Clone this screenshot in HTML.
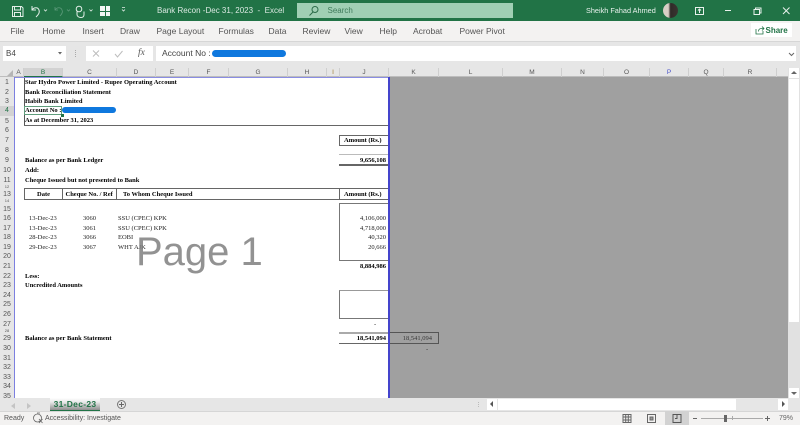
<!DOCTYPE html>
<html><head><meta charset="utf-8"><style>
html,body{margin:0;padding:0;width:800px;height:425px;overflow:hidden;background:#fff}
#p{position:relative;width:800px;height:425px;overflow:hidden;font-family:"Liberation Sans",sans-serif;background:#e6e6e6}
#p div,#p span{position:absolute;white-space:nowrap}
.r{left:0;width:800px}
.m{font-size:8.5px;color:#555;top:21px;height:20px;line-height:20px}
.c{top:68px;height:9px;line-height:10px;font-size:6.5px;color:#555;text-align:center;border-right:1px solid #cfcfcf;box-sizing:border-box}
.n{left:0;width:14px;text-align:center;font-size:7px;color:#555;height:10px;line-height:10px;margin-top:1px}
.t{font-family:"Liberation Serif",serif;font-size:6.5px;color:#222;height:10px;line-height:10px;margin-top:1px}
.b{font-weight:bold;color:#000}
.k{background:#666}
</style></head><body><div id="p">
<div style="left:0;top:0;width:800px;height:21px;background:#217346"></div>
<svg style="position:absolute;left:0;top:0" width="140" height="21" fill="none" stroke="#e4efe9" stroke-width="1">
<path d="M12.5 6.5h9l1.500 1.500v8.500h-10.500zM14.500 6.500v3.500h6v-3.500M14.500 16.500v-4h6v4"/>
<path d="M32 6v4h4M32 10c2-3 6-3 7 0 1 3-1 5-3 7"/>
<path d="M44 9.500l1.500 1.500 1.500-1.500" stroke-width=".8"/>
<path d="M55 7v3h3M55 10c2-3 6-3 7 0 1 2 0 4-2 6M67 9.500l1.500 1.500 1.500-1.500" stroke="#5d9a7b" stroke-width=".8"/>
<circle cx="79" cy="9" r="2.800"/><path d="M77 11.500v3c0 2 2 3 4 3s3-1 3-3v-3"/>
<path d="M89.500 9.500l1.500 1.500 1.500-1.500" stroke-width=".8"/>
<path d="M122 9.500l1.500 1.500 1.500-1.500M122 7.500h3" stroke-width=".8"/>
</svg>
<div style="left:100px;top:6px;width:10px;height:10px;background:#f3f7f5"></div>
<div style="left:104.500px;top:6px;width:1px;height:10px;background:#217346"></div>
<div style="left:100px;top:10.500px;width:10px;height:1px;background:#217346"></div>
<span style="left:157px;top:5px;font-size:8px;line-height:11px;color:#dbe9e2">Bank Recon -Dec 31, 2023&nbsp; -&nbsp; Excel</span>
<div style="left:297px;top:3px;width:216px;height:15px;background:#a0cfb4"></div>
<svg style="position:absolute;left:308px;top:5px" width="12" height="12" fill="none" stroke="#2b6b49" stroke-width="1"><circle cx="7" cy="4.500" r="3"/><path d="M5 7l-3.500 3.500"/></svg>
<span style="left:327.500px;top:5px;font-size:8px;line-height:11px;color:#3f7a5a">Search</span>
<span style="left:586px;top:5px;font-size:7.300px;line-height:11px;color:#e8f1ec">Sheikh Fahad Ahmed</span>
<div style="left:663px;top:3px;width:15px;height:15px;border-radius:50%;background:linear-gradient(90deg,#d8cfc6 0,#d8cfc6 35%,#2f2a28 50%,#3a3431 100%)"></div>
<svg style="position:absolute;left:690px;top:4px" width="110" height="14" fill="none" stroke="#e8f1ec" stroke-width="1">
<path d="M5.500 3.500h8v7h-8zM9.500 9v-4M8 6.500l1.500-1.500 1.500 1.500"/>
<path d="M35 6.500h6"/>
<path d="M64 5.500h5.500v5h-5.500zM65.500 5.500v-1.500h5.500v5h-1.500"/>
<path d="M93 3.500l6.500 6.500M99.500 3.500l-6.500 6.500"/>
</svg>
<div style="left:0;top:21px;width:800px;height:20px;background:#f3f2f1;border-bottom:1px solid #d6d6d6;box-sizing:content-box"></div>
<span class="m" style="left:10.500px">File</span>
<span class="m" style="left:42.500px">Home</span>
<span class="m" style="left:82.500px">Insert</span>
<span class="m" style="left:120px">Draw</span>
<span class="m" style="left:156.500px">Page Layout</span>
<span class="m" style="left:218.500px">Formulas</span>
<span class="m" style="left:268.500px">Data</span>
<span class="m" style="left:302.500px">Review</span>
<span class="m" style="left:344.500px">View</span>
<span class="m" style="left:379.500px">Help</span>
<span class="m" style="left:413px">Acrobat</span>
<span class="m" style="left:459.500px">Power Pivot</span>
<div style="left:751px;top:23px;width:41px;height:14px;background:#fff"></div>
<svg style="position:absolute;left:755px;top:25px" width="10" height="10" fill="none" stroke="#217346" stroke-width=".8"><path d="M1 4v5h7V6M3.500 6.500c0-2 1-3 3-3h2M7 1.500l2 2-2 2"/></svg>
<span style="left:765.500px;top:25px;font-size:8px;font-weight:bold;line-height:12px;color:#217346">Share</span>
<div style="left:0;top:42px;width:800px;height:26px;background:#e6e6e6"></div>
<div style="left:3px;top:46px;width:63px;height:15px;background:#fff"></div>
<span style="left:6px;top:48px;font-size:8px;line-height:11px;color:#444">B4</span>
<svg style="position:absolute;left:57px;top:51px" width="6" height="5" fill="#666"><path d="M1 1h4L3 3.500z"/></svg>
<div style="left:75px;top:50px;width:1px;height:1px;background:#aaa;box-shadow:0 2px #aaa,0 4px #aaa,0 6px #aaa"></div>
<div style="left:86px;top:46px;width:67px;height:15px;background:#fff"></div>
<svg style="position:absolute;left:90px;top:48px" width="60" height="12" fill="none" stroke="#bdbdbd" stroke-width="1"><path d="M3 2.500l6 6M9 2.500l-6 6M25 6l2.500 3 5-6"/></svg>
<span style="left:138px;top:47px;font-family:'Liberation Serif',serif;font-style:italic;font-size:9.500px;line-height:12px;color:#555">fx</span>
<div style="left:156px;top:46px;width:640px;height:15px;background:#fff"></div>
<span style="left:162px;top:48px;font-size:8.500px;line-height:11px;color:#444">Account No :</span>
<div style="left:212px;top:50px;width:74px;height:7px;border-radius:4px;background:#0f78de"></div>
<svg style="position:absolute;left:788px;top:52px" width="8" height="5" fill="none" stroke="#666"><path d="M1 1l2.500 2.500L6 1"/></svg>
<div style="left:0;top:68px;width:788px;height:9px;background:#e6e6e6;border-bottom:1px solid #bdbdbd;box-sizing:border-box"></div>
<svg style="position:absolute;left:6px;top:69px" width="8" height="8" fill="#b5b5b5"><path d="M7 1v6H1z"/></svg>
<div class="c" style="left:14px;width:10px">A</div><div class="c" style="left:24px;width:39px;background:#d2d2d2;color:#217346;border-bottom:1px solid #217346">B</div><div class="c" style="left:63px;width:54px">C</div><div class="c" style="left:117px;width:39px">D</div><div class="c" style="left:156px;width:33px">E</div><div class="c" style="left:189px;width:40px">F</div><div class="c" style="left:229px;width:59px">G</div><div class="c" style="left:288px;width:39px">H</div><div class="c" style="left:327px;width:13px;color:#a07a30">I</div><div class="c" style="left:340px;width:49px">J</div><div class="c" style="left:389px;width:50px">K</div><div class="c" style="left:439px;width:64px">L</div><div class="c" style="left:503px;width:59px">M</div><div class="c" style="left:562px;width:42px">N</div><div class="c" style="left:604px;width:46px">O</div><div class="c" style="left:650px;width:39px;color:#4a52c8">P</div><div class="c" style="left:689px;width:35px">Q</div><div class="c" style="left:724px;width:53px">R</div><div class="c" style="left:777px;width:11px;border-right:0"></div>
<div style="left:0;top:77px;width:15px;height:321px;background:#e6e6e6"></div>
<div class="n" style="top:77px">1</div><div class="n" style="top:87px">2</div><div class="n" style="top:96px">3</div><div class="n" style="top:105px;background:#d2d2d2;color:#217346">4</div><div class="n" style="top:116px">5</div><div class="n" style="top:125px">6</div><div class="n" style="top:135px">7</div><div class="n" style="top:145px">8</div><div class="n" style="top:155px">9</div><div class="n" style="top:165px">10</div><div class="n" style="top:175px">11</div><div class="n" style="top:184px;height:3px;overflow:hidden;line-height:3px;font-size:4px">12</div><div class="n" style="top:189px">13</div><div class="n" style="top:198px;height:4px;overflow:hidden;line-height:4px;font-size:4px">14</div><div class="n" style="top:204px">15</div><div class="n" style="top:213px">16</div><div class="n" style="top:223px">17</div><div class="n" style="top:232px">18</div><div class="n" style="top:242px">19</div><div class="n" style="top:251px">20</div><div class="n" style="top:261px">21</div><div class="n" style="top:271px">22</div><div class="n" style="top:280px">23</div><div class="n" style="top:290px">24</div><div class="n" style="top:299px">25</div><div class="n" style="top:309px">26</div><div class="n" style="top:319px">27</div><div class="n" style="top:328px;height:4px;overflow:hidden;line-height:4px;font-size:4px">28</div><div class="n" style="top:333px">29</div><div class="n" style="top:343px">30</div><div class="n" style="top:353px">31</div><div class="n" style="top:362px">32</div><div class="n" style="top:372px">33</div><div class="n" style="top:381px">34</div><div class="n" style="top:391px">35</div>
<div style="left:14px;top:77px;width:374px;height:321px;background:#fff"></div>
<div style="left:389px;top:77px;width:399px;height:321px;background:#a0a0a0"></div>
<div style="left:14px;top:77px;width:1px;height:321px;background:#7c80e0"></div>
<div style="left:15px;top:77px;width:374px;height:1px;background:#8a8de2"></div>
<div style="left:388px;top:77px;width:2px;height:321px;background:#4444cc;z-index:3"></div>
<div style="left:24px;top:78px;width:1px;height:47px;background:#555"></div>
<div class="k" style="left:24px;top:124.500px;width:364px;height:1.500px"></div>
<div style="left:24px;top:105.500px;width:38px;height:9.500px;border:1px solid #5f9d7c;box-sizing:border-box"></div>
<div style="left:61px;top:113.500px;width:3px;height:3px;background:#217346"></div>
<span class="t b" style="left:25px;top:77px">Star Hydro Power Limited - Rupee Operating Account</span>
<span class="t b" style="left:25px;top:87px">Bank Reconciliation Statement</span>
<span class="t b" style="left:25px;top:96px">Habib Bank Limited</span>
<span class="t b" style="left:25px;top:105px">Account No :</span>
<div style="left:62px;top:107px;width:54px;height:6px;border-radius:3px;background:#0f78de"></div>
<span class="t b" style="left:25px;top:115px">As at December 31, 2023</span>
<div style="left:339px;top:135px;width:49px;height:11px;border:1px solid #666;border-right:0;border-bottom-width:1.500px;box-sizing:border-box"></div>
<span class="t b" style="left:344px;top:135px">Amount (Rs.)</span>
<div style="left:339px;top:154px;width:49px;height:1px;background:#bbb"></div>
<span class="t b" style="right:414px;top:155px">9,656,108</span>
<div class="k" style="left:339px;top:164px;width:49px;height:1.500px"></div>
<span class="t b" style="left:25px;top:155px">Balance as per Bank Ledger</span>
<span class="t b" style="left:25px;top:165px">Add:</span>
<span class="t b" style="left:25px;top:175px">Cheque Issued but not presented to Bank</span>
<div class="k" style="left:24px;top:188px;width:364px;height:1px"></div>
<div class="k" style="left:24px;top:198.500px;width:364px;height:1.500px"></div>
<div class="k" style="left:24px;top:188px;width:1px;height:11px"></div>
<div class="k" style="left:62px;top:188px;width:1px;height:11px"></div>
<div class="k" style="left:116px;top:188px;width:1px;height:11px"></div>
<div class="k" style="left:339px;top:188px;width:1px;height:11px"></div>
<span class="t b" style="left:37px;top:188.500px">Date</span>
<span class="t b" style="left:65.500px;top:188.500px">Cheque No. / Ref</span>
<span class="t b" style="left:123px;top:188.500px">To Whom Cheque Issued</span>
<span class="t b" style="left:344px;top:188.500px">Amount (Rs.)</span>
<div style="left:339px;top:203px;width:49px;height:58px;border:1px solid #777;border-right:0;box-sizing:border-box"></div>
<span class="t" style="left:29px;top:213px">13-Dec-23</span><span class="t" style="left:83px;top:213px">3060</span><span class="t" style="left:118px;top:213px">SSU (CPEC) KPK</span><span class="t" style="right:414px;top:213px">4,106,000</span>
<span class="t" style="left:29px;top:223px">13-Dec-23</span><span class="t" style="left:83px;top:223px">3061</span><span class="t" style="left:118px;top:223px">SSU (CPEC) KPK</span><span class="t" style="right:414px;top:223px">4,718,000</span>
<span class="t" style="left:29px;top:232px">28-Dec-23</span><span class="t" style="left:83px;top:232px">3066</span><span class="t" style="left:118px;top:232px">EOBI</span><span class="t" style="right:414px;top:232px">40,320</span>
<span class="t" style="left:29px;top:242px">29-Dec-23</span><span class="t" style="left:83px;top:242px">3067</span><span class="t" style="left:118px;top:242px">WHT AJK</span><span class="t" style="right:414px;top:242px">20,666</span>
<span class="t b" style="right:414px;top:261px">8,884,986</span>
<span class="t b" style="left:25px;top:271px">Less:</span>
<span class="t b" style="left:25px;top:280px">Uncredited Amounts</span>
<div style="left:339px;top:290px;width:49px;height:29px;border:1px solid #777;border-right:0;border-top-color:#999;box-sizing:border-box"></div>
<span class="t" style="left:374px;top:319px">-</span>
<div style="left:339px;top:332px;width:49px;height:1.500px;background:#aaa"></div>
<span class="t b" style="right:414px;top:333px">18,541,094</span>
<span class="t b" style="left:25px;top:333px">Balance as per Bank Statement</span>
<div class="k" style="left:339px;top:342.500px;width:100px;height:1.500px"></div>
<div style="left:389px;top:332px;width:50px;height:12px;border:1px solid #555;box-sizing:border-box;z-index:2"></div>
<span class="t" style="right:368px;top:333px;color:#3a3a3a;z-index:2">18,541,094</span>
<span class="t" style="left:426px;top:344px;color:#333">-</span>
<span style="left:136px;top:227px;font-size:40px;line-height:50px;color:#808080;opacity:.85;z-index:4">Page 1</span>
<div style="left:788px;top:68px;width:12px;height:330px;background:#e1e1e1"></div>
<div style="left:789px;top:68px;width:10px;height:10px;background:#fff"></div>
<svg style="position:absolute;left:791px;top:70px" width="6" height="5" fill="#666"><path d="M0 4h6L3 1z"/></svg>
<div style="left:789px;top:79px;width:10px;height:243px;background:#fff"></div>
<div style="left:789px;top:388px;width:10px;height:10px;background:#fff"></div>
<svg style="position:absolute;left:791px;top:391px" width="6" height="5" fill="#666"><path d="M0 1h6L3 4z"/></svg>
<div style="left:0;top:398px;width:800px;height:14px;background:#e6e6e6"></div>
<svg style="position:absolute;left:10px;top:403px" width="24" height="6" fill="#c4c4c4"><path d="M5 0v6L1 3zM17 0v6l4-3z"/></svg>
<div style="left:50px;top:398px;width:50px;height:13px;background:linear-gradient(#fff 0,#e8e8e8 35%,#8e8e8e 100%);border-bottom:1.500px solid #217346;box-sizing:border-box;text-align:center;font-size:8.500px;font-weight:bold;line-height:12px;color:#217346;letter-spacing:.3px">31-Dec-23</div>
<div style="left:117px;top:400px;width:9px;height:9px;border:1px solid #777;border-radius:50%;box-sizing:border-box"></div>
<div style="left:119px;top:404px;width:5px;height:1px;background:#666"></div>
<div style="left:121px;top:402px;width:1px;height:5px;background:#666"></div>
<div style="left:478px;top:402px;width:1px;height:1px;background:#bbb;box-shadow:0 2px #bbb,0 4px #bbb"></div>
<div style="left:487px;top:399px;width:10px;height:11px;background:#fff"></div>
<svg style="position:absolute;left:489px;top:401px" width="6" height="7" fill="#555"><path d="M4 0v6L1 3z"/></svg>
<div style="left:498px;top:399px;width:238px;height:11px;background:#fff"></div>
<div style="left:778px;top:399px;width:10px;height:11px;background:#fff"></div>
<svg style="position:absolute;left:780px;top:401px" width="6" height="7" fill="#555"><path d="M2 0v6l3-3z"/></svg>
<div style="left:0;top:411px;width:800px;height:14px;background:#f3f2f1;border-top:1px solid #d6d6d6;box-sizing:border-box"></div>
<span style="left:4px;top:413px;font-size:7px;line-height:11px;color:#555">Ready</span>
<svg style="position:absolute;left:32px;top:412px" width="12" height="12" fill="none" stroke="#666" stroke-width=".8"><circle cx="5.500" cy="6" r="4"/><path d="M7 7l3.500 4M10.500 7l-3.500 4M5 1h3"/></svg>
<span style="left:45px;top:413px;font-size:7px;line-height:11px;color:#555">Accessibility: Investigate</span>
<div style="left:665px;top:411px;width:24px;height:14px;background:#d2d2d2"></div>
<svg style="position:absolute;left:620px;top:412px" width="66" height="13" fill="none" stroke="#666" stroke-width="1"><path d="M3 2.500h8v8h-8zM3 5h8M3 8h8M5.700 2.500v8M8.300 2.500v8"/><path d="M27.500 2.500h8v8h-8z"/><path d="M30 5h3v3h-3z" fill="#999"/><path d="M53 2.500h8v8h-8zM57 2.500v4h-2" stroke="#555"/></svg>
<div style="left:693px;top:418px;width:4px;height:1px;background:#666"></div>
<div style="left:701px;top:418px;width:62px;height:1px;background:#aaa"></div>
<div style="left:724px;top:415px;width:3px;height:7px;background:#666"></div>
<div style="left:732px;top:416px;width:1px;height:4px;background:#aaa"></div>
<div style="left:765px;top:418px;width:5px;height:1px;background:#666"></div>
<div style="left:767px;top:416px;width:1px;height:5px;background:#666"></div>
<span style="left:779px;top:413px;font-size:7px;line-height:11px;color:#666">79%</span>
</div></body></html>
